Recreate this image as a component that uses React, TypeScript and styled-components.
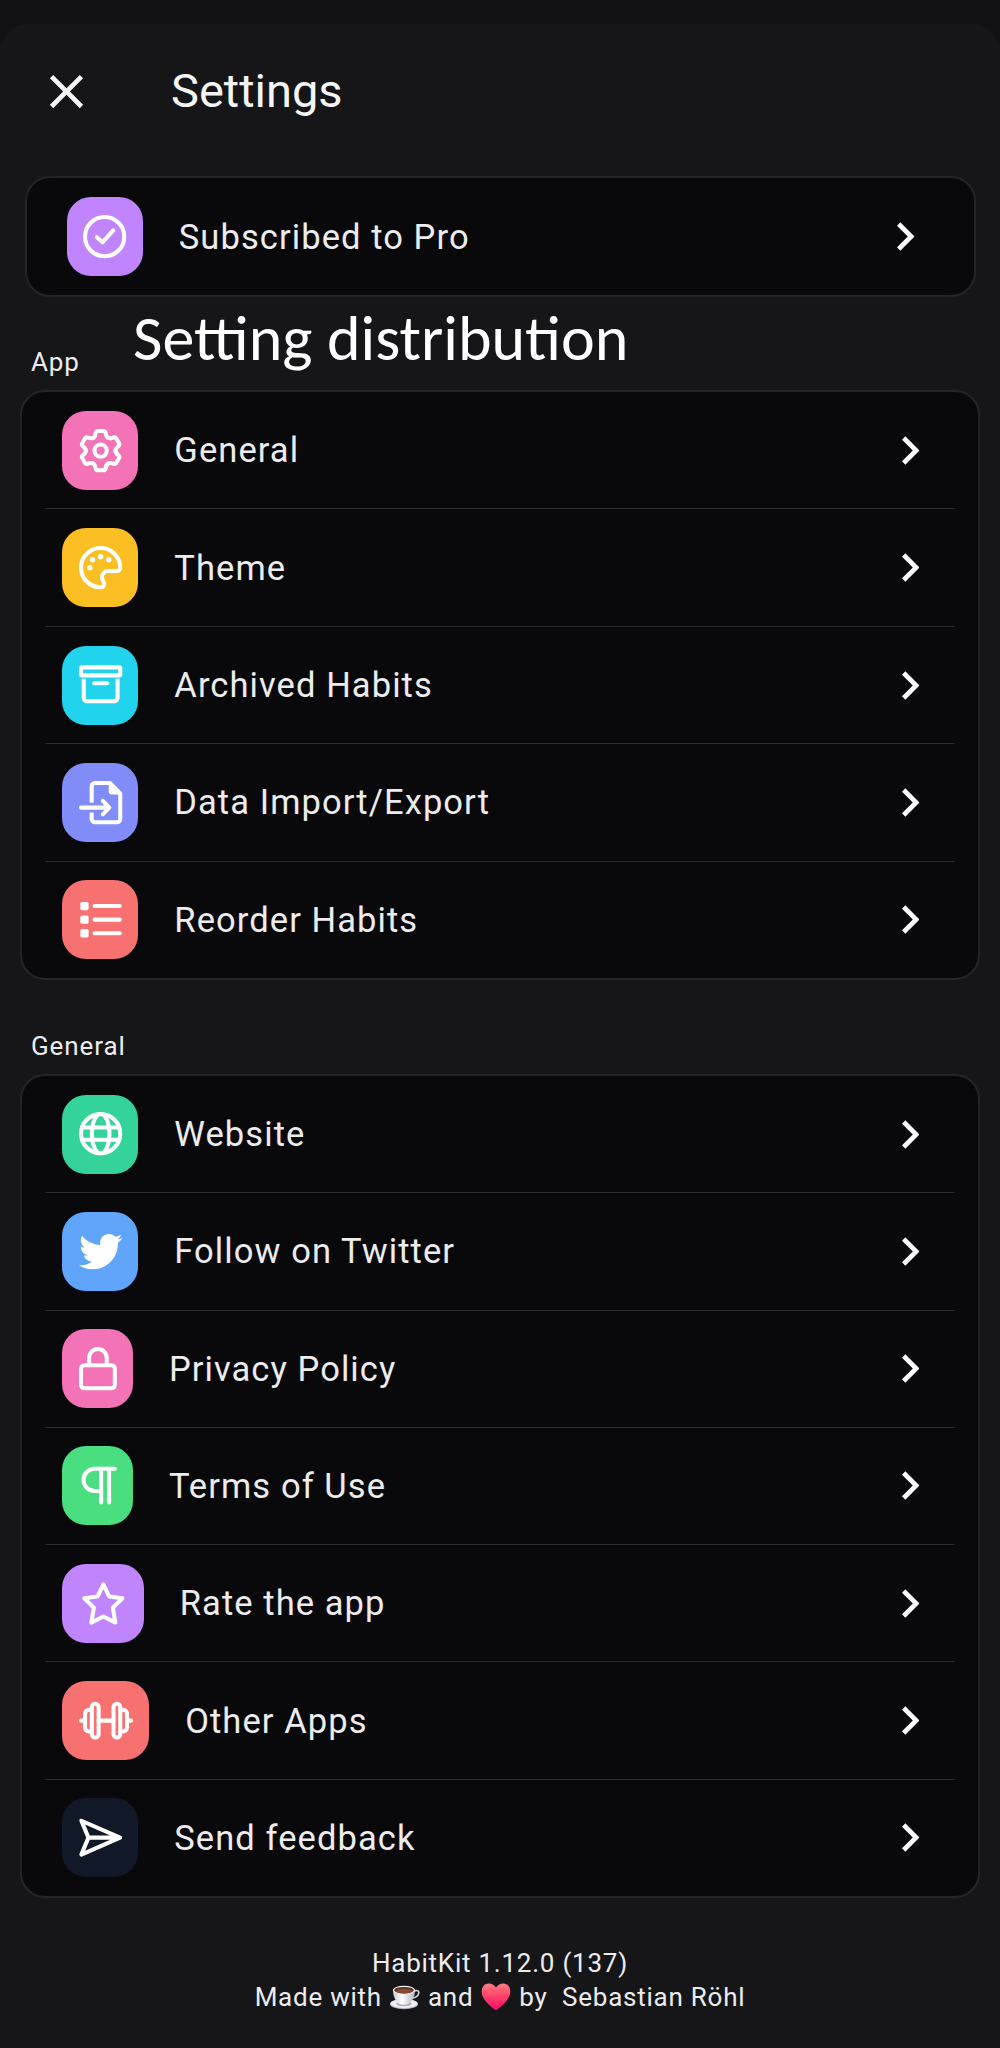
import React from "react";
import styled, { createGlobalStyle } from "styled-components";
import { FaTwitter } from "react-icons/fa6";

const GlobalStyle = createGlobalStyle`
  * { box-sizing: border-box; }
  body { margin: 0; background: #121214; }
`;

const Screen = styled.div`
  width: 1000px;
  height: 2048px;
  padding-top: 24px;
  overflow: hidden;
  background: #121214;
  color: #ececee;
  font-family: Roboto, "Liberation Sans", sans-serif;
`;

const Sheet = styled.main`
  display: flex;
  flex-direction: column;
  height: 2024px;
  background: #161618;
  border-radius: 28px 28px 0 0;
`;

const Header = styled.header`
  display: flex;
  align-items: center;
  height: 134px;
  padding-left: 38px;
  gap: 76px;
  color: #f4f4f5;
`;

const Title = styled.h1`
  margin: 0;
  font-size: 47px;
  font-weight: 400;
  line-height: 56px;
`;

const Card = styled.section<{ $height: number; $inset?: number }>`
  flex: none;
  display: flex;
  flex-direction: column;
  height: ${(p) => p.$height}px;
  margin: 0 ${(p) => p.$inset ?? 20}px;
  padding: 0 23px;
  background: #09090b;
  border: 2px solid #252528;
  border-radius: 25px;
`;

const ProSlot = styled.div`
  padding-top: 18px;
`;

const Row = styled.div`
  flex: 1 1 0;
  display: flex;
  align-items: center;
  padding: 0 26px 0 17px;
  & + & {
    border-top: 1px solid #2b2b2e;
  }
`;

const Tile = styled.span<{ $bg: string }>`
  flex: none;
  display: flex;
  align-items: center;
  justify-content: center;
  height: 79px;
  padding: 0 16.5px;
  margin-right: 36px;
  border-radius: 24px;
  background: ${(p) => p.$bg};
  color: #fff;
`;

const Label = styled.span`
  flex: 1;
  font-size: 34.5px;
  line-height: 44px;
  letter-spacing: 1.08px;
  white-space: pre;
`;

const SectionBar = styled.div<{ $height: number }>`
  flex: none;
  display: flex;
  align-items: flex-end;
  height: ${(p) => p.$height}px;
  padding: 0 0 12px 31px;
`;

const SectionLabel = styled.h2`
  margin: 0;
  width: 102px;
  font-size: 26px;
  font-weight: 400;
  line-height: 32px;
  letter-spacing: 0.9px;
`;

const Caption = styled.span`
  color: #fff;
  font-family: Carlito, Calibri, Lato, sans-serif;
  font-size: 64px;
  line-height: 80px;
  white-space: pre;
`;

const Footer = styled.footer`
  padding-top: 49px;
  text-align: center;
  font-size: 26px;
  line-height: 33.5px;
  letter-spacing: 0.76px;
`;

const FooterLine = styled.div`
  display: flex;
  justify-content: center;
  align-items: center;
  white-space: pre;
`;

const Emoji = styled.svg`
  width: 30px;
  height: 30px;
  margin: 0 8px;
`;

const Glyph = styled.svg`
  display: block;
  height: 43.3px;
  overflow: visible;
  fill: none;
  stroke: currentColor;
  stroke-width: 48;
  stroke-linecap: round;
  stroke-linejoin: round;
`;

const Material = styled.svg<{ $size: number }>`
  display: block;
  flex: none;
  width: ${(p) => p.$size}px;
  height: ${(p) => p.$size}px;
  fill: currentColor;
`;

const ChevronIcon = styled.svg`
  display: block;
  flex: none;
  width: 17.5px;
  height: 29px;
  margin-right: 10px;
  fill: #fafafa;
`;

const TwitterIcon = styled(FaTwitter)`
  display: block;
  width: 43.3px;
  height: 43.3px;
`;

function Icon({ units = 512, children }: { units?: number; children: React.ReactNode }) {
  return (
    <Glyph viewBox={`0 0 ${units} 512`} width={(units / 512) * 43.3}>
      {children}
    </Glyph>
  );
}

/* Draws only the inner half of a double-width stroke along a silhouette. */
function InnerOutline({ id, d }: { id: string; d: string }) {
  return (
    <>
      <clipPath id={id}>
        <path d={d} />
      </clipPath>
      <path d={d} clipPath={`url(#${id})`} strokeWidth={96} />
    </>
  );
}

/* One tooth and the valley after it, repeated every 60 degrees. */
const TOOTH = "M-66-180L-57-215Q-52-232-34-232L34-232Q52-232 57-215L66-180Q80-140 123-147";

const PALETTE =
  "M512 256c0 .9 0 1.8 0 2.7c-.4 36.5-33.6 61.3-70.1 61.3H344c-26.5 0-48 21.5-48 48c0 3.4 .4 6.7 1 9.9c2.1 10.2 6.5 20 10.8 29.9c6.1 13.8 12.1 27.5 12.1 42c0 31.8-21.6 60.7-53.4 62c-3.5 .1-7 .2-10.6 .2C114.6 512 0 397.4 0 256S114.6 0 256 0S512 114.6 512 256z";

const icons = {
  check: (
    <Icon>
      <circle cx={256} cy={256} r={232} />
      <path d="M164 262l68 60 126-140" />
    </Icon>
  ),
  gear: (
    <Icon>
      <g transform="translate(256 256)">
        {[0, 60, 120, 180, 240, 300].map((angle) => (
          <path key={angle} d={TOOTH} transform={`rotate(${angle})`} />
        ))}
        <circle r={72} />
      </g>
    </Icon>
  ),
  palette: (
    <Icon>
      <InnerOutline id="palette" d={PALETTE} />
      <g fill="currentColor" stroke="none">
        <circle cx={128} cy={256} r={32} />
        <circle cx={160} cy={163} r={32} />
        <circle cx={256} cy={128} r={32} />
        <circle cx={352} cy={163} r={32} />
      </g>
    </Icon>
  ),
  archive: (
    <Icon>
      <rect x={24} y={52} width={464} height={94} rx={10} />
      <path d="M56 186V412a40 40 0 0 0 40 40H416a40 40 0 0 0 40-40V186" strokeLinecap="butt" />
      <path d="M180 240H332" />
    </Icon>
  ),
  fileImport: (
    <Icon>
      <path
        d="M150 258V64a40 40 0 0 1 40-40H366L488 146V448a40 40 0 0 1-40 40H190a40 40 0 0 1-40-40V372"
        strokeLinecap="butt"
      />
      <path d="M352 12V128a32 32 0 0 0 32 32H500L380 24z" fill="currentColor" stroke="none" />
      <path d="M24 315H350M282 236l76 79-76 79" />
    </Icon>
  ),
  list: (
    <Icon>
      <g fill="currentColor" stroke="none">
        <rect x={16} y={46} width={98} height={98} rx={20} />
        <rect x={16} y={207} width={98} height={98} rx={20} />
        <rect x={16} y={368} width={98} height={98} rx={20} />
      </g>
      <path d="M184 95H482M184 256H482M184 417H482" />
    </Icon>
  ),
  globe: (
    <Icon>
      <circle cx={256} cy={256} r={232} />
      <ellipse cx={256} cy={256} rx={104} ry={232} />
      <path d="M36 184H476M36 328H476" />
    </Icon>
  ),
  twitter: <TwitterIcon />,
  lock: (
    <Icon units={448}>
      <rect x={24} y={216} width={400} height={272} rx={40} />
      <path d="M120 216V128a104 104 0 0 1 208 0V216" />
    </Icon>
  ),
  paragraph: (
    <Icon units={448}>
      <path d="M424 56H186a132 132 0 0 0 0 264H262M262 56V456M356 56V456" />
    </Icon>
  ),
  star: (
    <Icon units={576}>
      <path d="M288 28L357 172 514 192 400 304 430 480 288 408 146 480 176 304 62 192 219 172z" />
    </Icon>
  ),
  dumbbell: (
    <Icon units={640}>
      <rect x={152} y={56} width={80} height={400} rx={38} />
      <rect x={408} y={56} width={80} height={400} rx={38} />
      <path d="M152 128H118a46 46 0 0 0-46 46V338a46 46 0 0 0 46 46H152M488 128H522a46 46 0 0 1 46 46V338a46 46 0 0 1-46 46H488M24 256H72M232 256H408M568 256H616" />
    </Icon>
  ),
  send: (
    <Icon>
      <path d="M28 56L486 256 28 456 112 256zM112 256H486" />
    </Icon>
  ),
};

type Item = { label: string; bg: string; icon: keyof typeof icons };

const appItems: Item[] = [
  { label: "General", bg: "#f472b6", icon: "gear" },
  { label: "Theme", bg: "#fbbf24", icon: "palette" },
  { label: "Archived Habits", bg: "#22d3ee", icon: "archive" },
  { label: "Data Import/Export", bg: "#818cf8", icon: "fileImport" },
  { label: "Reorder Habits", bg: "#f87171", icon: "list" },
];

const generalItems: Item[] = [
  { label: "Website", bg: "#34d399", icon: "globe" },
  { label: "Follow on Twitter", bg: "#60a5fa", icon: "twitter" },
  { label: "Privacy Policy", bg: "#f472b6", icon: "lock" },
  { label: "Terms of Use", bg: "#4ade80", icon: "paragraph" },
  { label: "Rate the app", bg: "#c084fc", icon: "star" },
  { label: "Other Apps", bg: "#f87171", icon: "dumbbell" },
  { label: "Send feedback", bg: "#111827", icon: "send" },
];

function SettingRow({ label, bg, icon }: Item) {
  return (
    <Row>
      <Tile $bg={bg}>{icons[icon]}</Tile>
      <Label>{label}</Label>
      <Chevron />
    </Row>
  );
}

function Chevron() {
  return (
    <ChevronIcon viewBox="8.59 6 7.41 12">
      <path d="M10 6 8.59 7.41 13.17 12l-4.58 4.59L10 18l6-6z" />
    </ChevronIcon>
  );
}

function Coffee() {
  return (
    <Emoji viewBox="0 0 30 30" role="img" aria-label="coffee">
      <defs>
        <linearGradient id="cup" x1="0" x2="1">
          <stop offset="0" stopColor="#c9c9d2" />
          <stop offset=".4" stopColor="#ffffff" />
          <stop offset="1" stopColor="#b5b5c2" />
        </linearGradient>
      </defs>
      <ellipse cx="14" cy="22.3" rx="13.8" ry="5" fill="#b4b4c0" />
      <ellipse cx="14" cy="21.5" rx="13.6" ry="4.5" fill="#ededf2" />
      <ellipse cx="14" cy="21.8" rx="7.5" ry="2.3" fill="#a9a9b6" />
      <path d="M24 9.5c3-2 5.6-.8 4.6 2.3-.8 2.4-3.4 4-6.4 4.4" fill="none" stroke="#d5d5de" strokeWidth="1.6" />
      <path d="M3 8c0 7 3 12.5 7 14.2 2 .8 5.5.8 7.500 0C22 20.500 25 15 25 8z" fill="url(#cup)" />
      <ellipse cx="14" cy="8" rx="11.2" ry="4.3" fill="#f2f2f6" />
      <ellipse cx="14" cy="8.2" rx="9.8" ry="3.3" fill="#5b3020" />
      <ellipse cx="14" cy="9" rx="8.2" ry="2.3" fill="#834a34" />
    </Emoji>
  );
}

function Heart() {
  return (
    <Emoji viewBox="0 0 30 30" role="img" aria-label="love">
      <defs>
        <linearGradient id="heart" x1="0" y1="0" x2="0" y2="1">
          <stop offset="0" stopColor="#ff7d83" />
          <stop offset=".5" stopColor="#ff3f68" />
          <stop offset="1" stopColor="#f60c6c" />
        </linearGradient>
      </defs>
      <path
        d="M15 5.5C13 2.6 10.6 1.5 8 1.5 3.6 1.5.7 4.800.7 9.400c0 7.600 7.600 13.600 13 18.200q1.300 1 2.600 0c5.400-4.600 13-10.600 13-18.200 0-4.600-2.900-7.900-7.300-7.900-2.600 0-5 1.100-7 4z"
        fill="url(#heart)"
      />
    </Emoji>
  );
}

export default function App() {
  return (
    <>
      <GlobalStyle />
      <Screen>
        <Sheet>
          <Header>
            <Material viewBox="0 0 24 24" $size={57}>
              <path d="M19 6.41 17.59 5 12 10.59 6.41 5 5 6.41 10.59 12 5 17.59 6.41 19 12 13.41 17.59 19 19 17.59 13.41 12z" />
            </Material>
            <Title>Settings</Title>
          </Header>

          <ProSlot>
            <Card $height={121} $inset={24.5}>
              <SettingRow label="Subscribed to Pro" bg="#c084fc" icon="check" />
            </Card>
          </ProSlot>

          <SectionBar $height={93}>
            <SectionLabel>App</SectionLabel>
            <Caption>Setting distribution</Caption>
          </SectionBar>
          <Card $height={590}>
            {appItems.map((item) => (
              <SettingRow key={item.label} {...item} />
            ))}
          </Card>

          <SectionBar $height={94}>
            <SectionLabel>General</SectionLabel>
          </SectionBar>
          <Card $height={824}>
            {generalItems.map((item) => (
              <SettingRow key={item.label} {...item} />
            ))}
          </Card>

          <Footer>
            <div>HabitKit 1.12.0 (137)</div>
            <FooterLine>
              Made with
              <Coffee />
              and
              <Heart />
              {"by  Sebastian Röhl"}
            </FooterLine>
          </Footer>
        </Sheet>
      </Screen>
    </>
  );
}
